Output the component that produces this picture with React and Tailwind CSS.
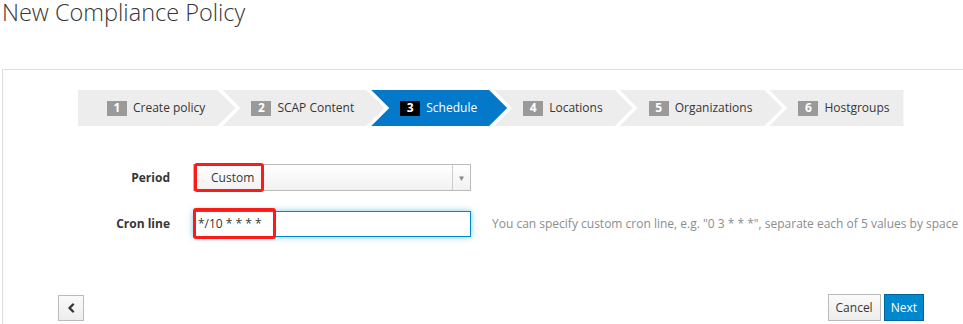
import React from "react";

const steps = [
  { n: 1, label: "Create policy" },
  { n: 2, label: "SCAP Content" },
  { n: 3, label: "Schedule", active: true },
  { n: 4, label: "Locations" },
  { n: 5, label: "Organizations" },
  { n: 6, label: "Hostgroups" },
];

function Step({ n, label, active, first, last }) {
  const clip = first
    ? "[clip-path:polygon(0_0,calc(100%-18px)_0,100%_50%,calc(100%-18px)_100%,0_100%)]"
    : last
    ? "[clip-path:polygon(0_0,100%_0,100%_100%,0_100%,18px_50%)]"
    : "[clip-path:polygon(0_0,calc(100%-18px)_0,100%_50%,calc(100%-18px)_100%,0_100%,18px_50%)]";
  return (
    <div
      className={`${clip} ${first ? "" : "-ml-[13px]"} ${last ? "flex-1 pr-[14px]" : "pr-[30px]"} ${
        active ? "bg-[#0479c9] text-white" : "bg-[#ededed] text-[#363636]"
      } h-[36px] pl-[29px] flex items-center shrink-0`}
    >
      <span
        className={`${active ? "bg-black" : "bg-[#9a9a9a]"} text-white font-bold text-[12px] w-[20px] h-[15px] flex items-center justify-center leading-none mr-[6px]`}
      >
        {n}
      </span>
      <span className="text-[12px] leading-none whitespace-nowrap">{label}</span>
    </div>
  );
}

export default function App() {
  return (
    <div className="w-[963px] h-[324px] overflow-hidden bg-white font-['Open_Sans',sans-serif] text-[#363636]">
      <div className="h-[69px] pl-[2px] pt-[1px]">
        <h1 className="text-[23.5px] font-light leading-[22px] text-[#363636]">
          New Compliance Policy
        </h1>
      </div>
      <div className="ml-[2px] border-l border-t border-[#dedede] h-[255px] w-[1000px]">
        <div className="pl-[75px] pt-[20px] flex w-[900px]">
          {steps.map((s, i) => (
            <Step key={s.n} {...s} first={i === 0} last={i === steps.length - 1} />
          ))}
        </div>

        <div className="mt-[38px] flex items-center">
          <label className="w-[167px] text-right text-[12px] font-bold">Period</label>
          <div className="relative ml-[23px] w-[278px] h-[27px] border border-[#bbbbbb] bg-gradient-to-b from-white to-[#f1f1f1] flex items-center">
            <span className="pl-[17px] text-[12px] text-[#363636] flex-1">Custom</span>
            <span className="w-[18px] h-full border-l border-[#cccccc] flex items-center justify-center text-[#888] text-[8px]">
              ▼
            </span>
            <div className="absolute left-[0px] -top-[2px] w-[70px] h-[29px] border-[3px] border-[#ff1a1a] rounded-[3px]"></div>
          </div>
        </div>

        <div className="mt-[20px] flex items-center">
          <label className="w-[167px] text-right text-[12px] font-bold">Cron line</label>
          <div className="relative ml-[23px] w-[278px] h-[26px] border border-[#0088ce] bg-white shadow-[0_0_6px_rgba(0,136,206,0.5)] flex items-center">
            <span className="pl-[4px] text-[12px] text-[#363636]">*/10 * * * *</span>
            <div className="absolute -left-[1px] -top-[4px] w-[83px] h-[31px] border-[3px] border-[#ff1a1a] rounded-[3px]"></div>
          </div>
          <span className="ml-[21px] text-[12px] text-[#8b8d8f] whitespace-nowrap">
            You can specify custom cron line, e.g. "0 3 * * *", separate each of 5 values by space
          </span>
        </div>

        <div className="mt-[57px] flex items-center w-[961px]">
          <button className="ml-[55px] w-[26px] h-[26px] border border-[#bbbbbb] bg-gradient-to-b from-[#fafafa] to-[#ededed] flex items-center justify-center">
            <svg width="8" height="10" viewBox="0 0 8 10">
              <path d="M6 1.5 L2.5 5 L6 8.5" stroke="#363636" strokeWidth="2.4" fill="none" strokeLinecap="round" strokeLinejoin="round" />
            </svg>
          </button>
          <div className="flex-1"></div>
          <button className="h-[27px] px-[7px] border border-[#bbbbbb] bg-gradient-to-b from-[#fafafa] to-[#ededed] text-[12px] text-[#363636]">
            Cancel
          </button>
          <button className="ml-[3px] mr-[40px] h-[27px] px-[6px] border border-[#00659c] bg-[#0088ce] text-[12px] text-white">
            Next
          </button>
        </div>
      </div>
    </div>
  );
}
